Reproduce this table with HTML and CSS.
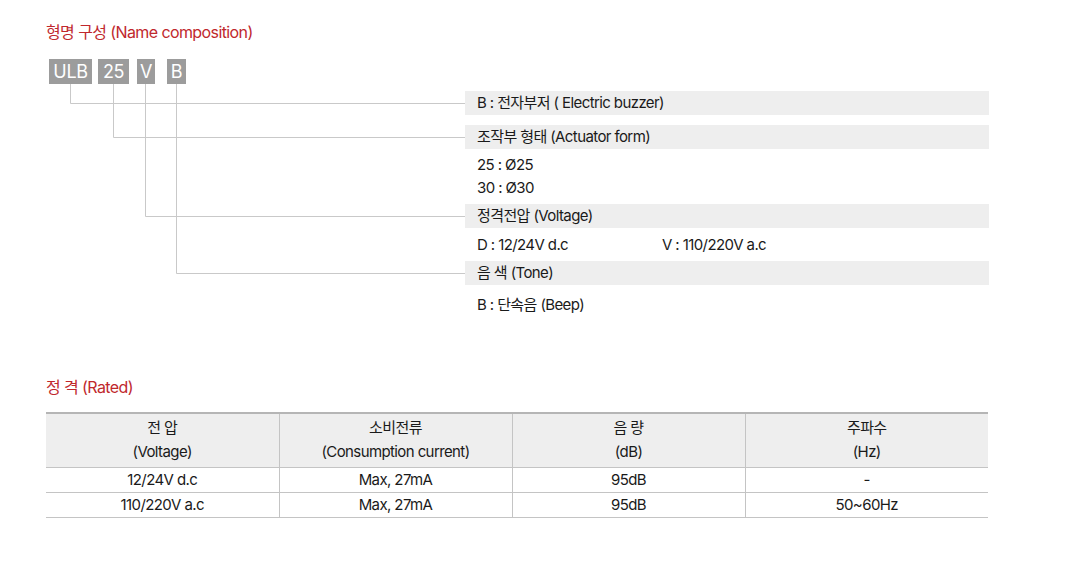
FILE: index.html
```html
<!DOCTYPE html>
<html lang="ko">
<head>
<meta charset="utf-8">
<title>ULB</title>
<link rel="stylesheet" href="styles.css">
</head>
<body>
<div class="page">
  <h2 class="sec-title">형명 구성 (Name composition)</h2>
  <div class="composition">
    <div class="diagram">
      <div class="codes">
        <span class="code code-ulb">ULB</span>
        <span class="code code-25">25</span>
        <span class="code code-v">V</span>
        <span class="code code-b">B</span>
      </div>
      <svg class="connectors" width="419" height="200" viewBox="0 0 419 200">
        <g fill="none" stroke="#c9c9c9" stroke-width="1">
          <path d="M24.5 0 V19.5 H419"/>
          <path d="M67.5 0 V53.5 H419"/>
          <path d="M99.5 0 V132.5 H419"/>
          <path d="M130.5 0 V189.5 H419"/>
        </g>
      </svg>
    </div>
    <div class="legend">
      <div class="bar bar-first">B : 전자부저 ( Electric buzzer)</div>
      <div class="bar">조작부 형태 (Actuator form)</div>
      <div class="rows">
        <div class="row">25 : Ø25</div>
        <div class="row">30 : Ø30</div>
      </div>
      <div class="bar">정격전압 (Voltage)</div>
      <div class="rows rows-mid">
        <div class="row row-split"><span class="col-a">D : 12/24V d.c</span><span>V : 110/220V a.c</span></div>
      </div>
      <div class="bar">음 색 (Tone)</div>
      <div class="rows rows-last">
        <div class="row">B : 단속음 (Beep)</div>
      </div>
    </div>
  </div>

  <h2 class="sec-title sec-rated">정 격 (Rated)</h2>
  <table class="spec">
    <colgroup>
      <col class="c1"><col class="c2"><col class="c3"><col class="c4">
    </colgroup>
    <thead>
      <tr>
        <th>전 압<br>(Voltage)</th>
        <th>소비전류<br>(Consumption current)</th>
        <th>음 량<br>(dB)</th>
        <th>주파수<br>(Hz)</th>
      </tr>
    </thead>
    <tbody>
      <tr><td>12/24V d.c</td><td>Max, 27mA</td><td>95dB</td><td>-</td></tr>
      <tr><td>110/220V a.c</td><td>Max, 27mA</td><td>95dB</td><td>50~60Hz</td></tr>
    </tbody>
  </table>
</div>
</body>
</html>
```
FILE: styles.css
```css
* { box-sizing: border-box; }
html, body { margin: 0; padding: 0; background: #fff; }
body {
  font-family: "Inter", "Noto Sans CJK KR", sans-serif;
  color: #1a1a1a;
  font-size: 15px;
  letter-spacing: -0.04em;
}
.page {
  padding: 20px 0 0 46px;
  width: 1087px;
}
.sec-title {
  margin: 0;
  font-size: 16px;
  font-weight: 400;
  line-height: 24px;
  color: #c0282d;
}
.composition {
  display: grid;
  grid-template-columns: 419px 524px;
  margin-top: 15px;
}
.diagram { display: flex; flex-direction: column; }
.codes {
  display: flex;
  height: 25px;
  padding-left: 3px;
}
.code {
  display: block;
  height: 25px;
  line-height: 25px;
  background: #9c9c9c;
  color: #fff;
  font-size: 18px;
  text-align: center;
  letter-spacing: -0.02em;
}
.code-ulb { width: 43px; }
.code-25 { width: 31px; margin-left: 6px; }
.code-v { width: 18px; margin-left: 8px; }
.code-b { width: 19px; margin-left: 12px; }
.connectors { display: block; }

.legend { padding-top: 32px; }
.bar {
  height: 24px;
  line-height: 24px;
  background: #eeeeee;
  padding-left: 12px;
}
.bar-first { margin-bottom: 10px; }
.rows { padding: 4px 0 5px 12px; }
.rows-mid { padding-top: 5px; }
.row { line-height: 23px; height: 23px; }
.row-split { display: flex; }
.col-a { width: 185px; }
.rows-last { padding-top: 8px; }

.sec-rated { margin-top: 54px; }
.spec {
  margin-top: 13px;
  width: 942px;
  border-collapse: collapse;
  table-layout: fixed;
  text-align: center;
}
.spec .c1, .spec .c2, .spec .c3 { width: 233px; }
.spec .c4 { width: 243px; }
.spec th, .spec td {
  font-weight: 400;
  border-left: 1px solid #c4c4c4;
  border-bottom: 1px solid #c4c4c4;
}
.spec th:first-child, .spec td:first-child { border-left: 0; }
.spec thead th {
  background: #eeeeee;
  border-top: 2px solid #b5b5b5;
  line-height: 24px;
  padding: 2px 0 3px;
}
.spec td {
  height: 25px;
  line-height: 24px;
  padding: 0;
}
```
